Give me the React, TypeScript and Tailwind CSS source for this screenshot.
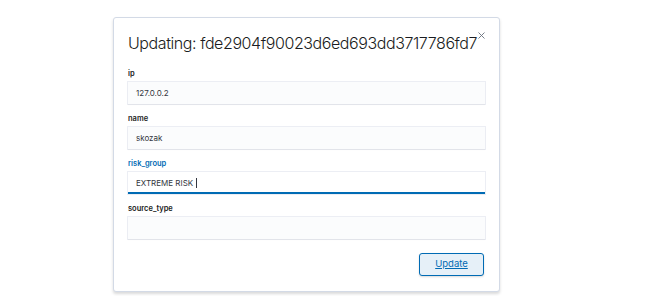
export default function App() {
  const fields = [
    { label: "ip", value: "127.0.0.2" },
    { label: "name", value: "skozak" },
    { label: "risk_group", value: "EXTREME RISK", focused: true },
    { label: "source_type", value: "" },
  ];
  return (
    <div
      className="w-[658px] h-[296px] bg-white relative overflow-hidden"
      style={{ fontFamily: "Inter, 'Liberation Sans', sans-serif" }}
    >
      <div className="absolute left-[113px] top-[17px] w-[387px] h-[275px] bg-white border border-[#d3dae6] rounded-[3px] shadow-[0_2px_3px_rgba(0,0,0,0.15)] pl-[14px] pr-[14px] pt-[15px]">
        <button className="absolute right-[14px] top-[14px] text-[#69707d]">
          <svg width="7" height="7" viewBox="0 0 7 7" stroke="currentColor" strokeWidth="0.9">
            <path d="M0.5 0.5l6 6M6.5 0.5l-6 6" />
          </svg>
        </button>
        <h2 className="text-[16px] font-light text-[#1a1c21] leading-[20px] tracking-[-0.42px] whitespace-nowrap">
          Updating: fde2904f90023d6ed693dd3717786fd7
        </h2>
        <div className="mt-[15px] flex flex-col gap-[9px]">
          {fields.map((f) => (
            <div key={f.label} className="flex flex-col">
              <label
                className={`text-[7.5px] font-semibold leading-[12px] mb-[2px] ${
                  f.focused ? "text-[#006bb4]" : "text-[#1a1c21]"
                }`}
              >
                {f.label}
              </label>
              <div
                className={`h-[22px] w-[357px] flex items-center px-[8px] text-[8px] text-[#343741] ${
                  f.focused
                    ? "bg-white shadow-[inset_0_-2px_0_#006bb4,0_0_0_1px_rgba(15,39,118,0.08)]"
                    : "bg-[#fbfcfd] shadow-[0_0_0_1px_rgba(15,39,118,0.08),0_1px_1px_rgba(0,0,0,0.04)]"
                }`}
              >
                {f.value}
                {f.focused && <span className="ml-[3px] w-px h-[10px] bg-[#343741]" />}
              </div>
            </div>
          ))}
        </div>
        <div className="flex justify-end mt-[14px] pr-[1px]">
          <button className="w-[65px] h-[23px] rounded-[3px] border border-[#006bb4] bg-[#e6f0f8] text-[#006bb4] text-[9.5px] underline shadow-[0_1px_2px_rgba(0,0,0,0.15)]">
            Update
          </button>
        </div>
      </div>
    </div>
  );
}
